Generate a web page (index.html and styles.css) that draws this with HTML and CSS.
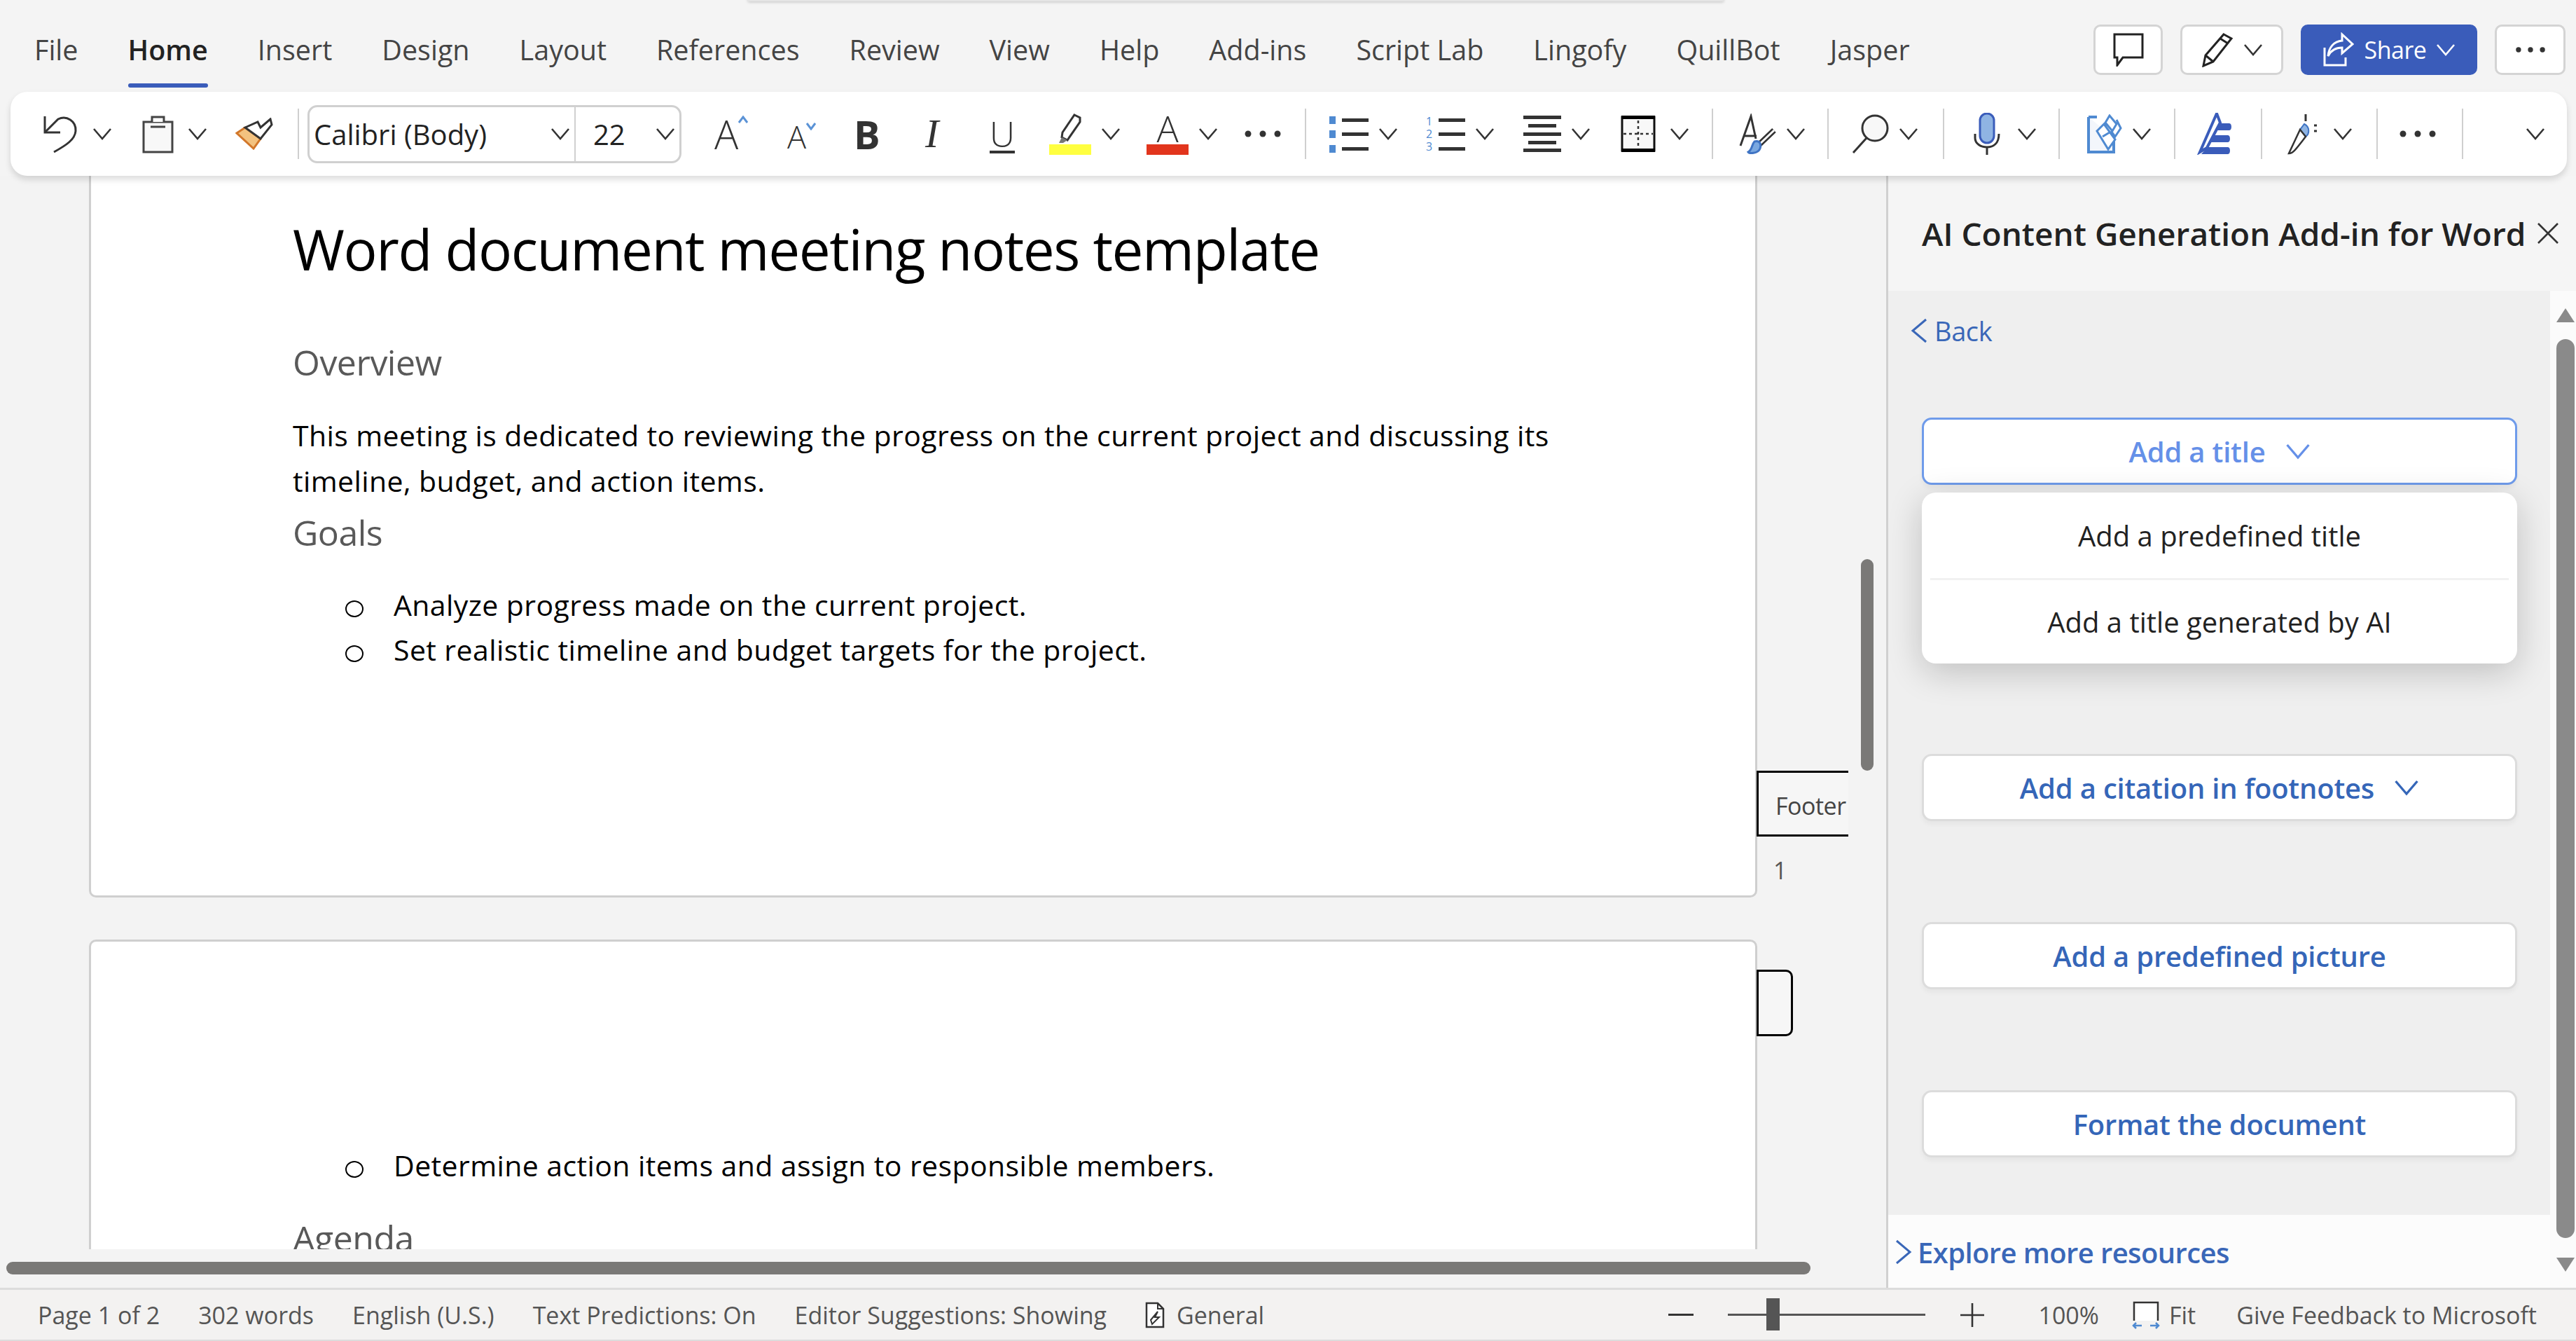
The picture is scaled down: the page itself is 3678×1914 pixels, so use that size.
FILE: index.html
```html
<!DOCTYPE html>
<html lang="en">
<head>
    <meta charset="UTF-8">
    <title>Word document meeting notes template</title>
    <link rel="stylesheet" href="styles.css">
</head>
<body>
    <svg class="defs" width="0" height="0">
        <symbol id="chev" viewBox="0 0 28 18"><path d="M2 2 14 16 26 2" fill="none" stroke="currentColor" stroke-width="2.6"/></symbol>
        <symbol id="dots" viewBox="0 0 54 12"><circle cx="6" cy="6" r="4.5"/><circle cx="27" cy="6" r="4.5"/><circle cx="48" cy="6" r="4.5"/></symbol>
    </svg>
    <div class="window-edge"></div>
    <header class="topbar">
        <nav class="tabs">
            <span>File</span>
            <span class="tab-active">Home</span>
            <span>Insert</span>
            <span>Design</span>
            <span>Layout</span>
            <span>References</span>
            <span>Review</span>
            <span>View</span>
            <span>Help</span>
            <span>Add-ins</span>
            <span>Script Lab</span>
            <span>Lingofy</span>
            <span>QuillBot</span>
            <span>Jasper</span>
        </nav>
        <div class="actions">
            <button class="act act-comment">
                <svg width="44" height="48" viewBox="0 0 44 48"><path d="M2 2H42V35H14L6 46V35H2Z" fill="#fff" stroke="#222" stroke-width="3"/></svg>
            </button>
            <button class="act act-pen">
                <svg width="46" height="50" viewBox="0 0 46 50"><path d="M32 3 43 9 17 42 3 48 6 33Z M27 9 38 16 M6 33 17 42" fill="#fff" stroke="#222" stroke-width="3"/></svg>
                <svg class="chev"><use href="#chev"/></svg>
            </button>
            <button class="act act-share">
                <svg width="46" height="50" viewBox="0 0 46 50"><path d="M3 22V47H33V36" fill="none" stroke="#fff" stroke-width="3"/><path d="M28 3 43 17 28 30V22C18 22 12 26 8 34 9 22 16 13 28 12Z" fill="none" stroke="#fff" stroke-width="3"/></svg>
                <span>Share</span>
                <svg class="chev"><use href="#chev"/></svg>
            </button>
            <button class="act act-more">
                <svg class="dots-sm"><use href="#dots"/></svg>
            </button>
        </div>
    </header>

    <section class="ribbon">
        <div class="tool">
            <svg width="51" height="56" viewBox="0 0 51 56"><path d="M3 3V26H25" fill="none" stroke="#333" stroke-width="3"/><path d="M3 26 22 7C34 1 48 10 47 24 46 36 34 44 16 54" fill="none" stroke="#333" stroke-width="3"/></svg>
            <svg class="chev"><use href="#chev"/></svg>
        </div>
        <div class="tool">
            <svg width="45" height="56" viewBox="0 0 45 56"><path d="M2 11H43V54H2Z" fill="#f8f8f8" stroke="#444" stroke-width="3"/><path d="M14 11V4H31V11M12 18H33" fill="#fff" stroke="#444" stroke-width="3"/></svg>
            <svg class="chev"><use href="#chev"/></svg>
        </div>
        <div class="tool">
            <svg width="54" height="46" viewBox="0 0 54 46"><path d="M2 22 14 14 36 30 26 44Z" fill="#f3c27f" stroke="#d2772a" stroke-width="3"/><path d="M14 14 32 6 36 14 50 2 52 10 36 30Z" fill="#fff" stroke="#333" stroke-width="3"/></svg>
        </div>
        <div class="sep"></div>
        <div class="font-combo">
            <div class="font-name"><span>Calibri (Body)</span><svg class="chev"><use href="#chev"/></svg></div>
            <div class="font-size"><span>22</span><svg class="chev"><use href="#chev"/></svg></div>
        </div>
        <div class="tool glyph glyph-a">A<svg class="caret" width="14" height="12" viewBox="0 0 14 12"><path d="M1 10 7 2 13 10" fill="none" stroke="#5b93d6" stroke-width="3"/></svg></div>
        <div class="tool glyph glyph-a-sm">A<svg class="caret" width="14" height="12" viewBox="0 0 14 12"><path d="M1 2 7 10 13 2" fill="none" stroke="#5b93d6" stroke-width="3"/></svg></div>
        <div class="tool glyph glyph-b">B</div>
        <div class="tool glyph glyph-i">I</div>
        <div class="tool glyph glyph-u">U</div>
        <div class="tool tool-tight">
            <div class="swatch-tool">
                <svg width="40" height="42" viewBox="0 0 40 42"><path d="M26 2 34 6 34 12 16 38 8 34 9 27Z" fill="#fff" stroke="#333" stroke-width="3"/><path d="M8 34 16 38 10 42H4Z" fill="#777"/></svg>
                <div class="swatch swatch-yellow"></div>
            </div>
            <svg class="chev"><use href="#chev"/></svg>
        </div>
        <div class="tool tool-tight">
            <div class="swatch-tool">
                <span class="swatch-letter">A</span>
                <div class="swatch swatch-red"></div>
            </div>
            <svg class="chev"><use href="#chev"/></svg>
        </div>
        <div class="tool"><svg class="dots"><use href="#dots"/></svg></div>
        <div class="sep"></div>
        <div class="tool tool-tight">
            <svg width="56" height="54" viewBox="0 0 56 54"><g fill="#4f8ad1"><rect x="0" y="2" width="9" height="11"/><rect x="0" y="22" width="9" height="11"/><rect x="0" y="43" width="9" height="11"/></g><g fill="#333"><rect x="18" y="5" width="38" height="5"/><rect x="18" y="25" width="38" height="5"/><rect x="18" y="46" width="38" height="5"/></g></svg>
            <svg class="chev"><use href="#chev"/></svg>
        </div>
        <div class="tool tool-tight">
            <div class="numbering">
                <div class="num-col"><span>1</span><span>2</span><span>3</span></div>
                <svg width="38" height="54" viewBox="0 0 38 54"><g fill="#333"><rect y="5" width="38" height="5"/><rect y="25" width="38" height="5"/><rect y="46" width="38" height="5"/></g></svg>
            </div>
            <svg class="chev"><use href="#chev"/></svg>
        </div>
        <div class="tool tool-tight">
            <svg width="54" height="54" viewBox="0 0 54 54"><g fill="#333"><rect y="1" width="54" height="5"/><rect x="7" y="13" width="40" height="5"/><rect y="25" width="54" height="5"/><rect x="7" y="37" width="40" height="5"/><rect y="48" width="54" height="5"/></g></svg>
            <svg class="chev"><use href="#chev"/></svg>
        </div>
        <div class="tool">
            <svg width="50" height="54" viewBox="0 0 50 54"><rect x="2" y="3" width="46" height="48" fill="#f8f8f8" stroke="#111" stroke-width="3"/><rect x="1" y="1" width="48" height="5"/><rect x="1" y="48" width="48" height="5"/><path d="M25 8V48M4 27H46" fill="none" stroke="#333" stroke-width="2.5" stroke-dasharray="4 4"/></svg>
            <svg class="chev"><use href="#chev"/></svg>
        </div>
        <div class="sep"></div>
        <div class="tool tool-tight">
            <svg width="53" height="58" viewBox="0 0 53 58"><path d="M2 46 17 4 24 36M7 32H25" fill="none" stroke="#333" stroke-width="3"/><path d="M50 24 29 44" stroke="#333" stroke-width="8" fill="none"/><path d="M50 24 29 44" stroke="#fff" stroke-width="3" fill="none"/><path d="M22 40C30 38 32 44 30 50 27 58 14 57 13 55 19 52 18 44 22 40Z" fill="#7aa8e0" stroke="#3f74c4" stroke-width="3"/></svg>
            <svg class="chev"><use href="#chev"/></svg>
        </div>
        <div class="sep"></div>
        <div class="tool tool-tight">
            <svg width="53" height="56" viewBox="0 0 53 56"><circle cx="33" cy="20" r="18" fill="#f8f8f8" stroke="#333" stroke-width="3"/><path d="M21 34 2 55" stroke="#333" stroke-width="3"/></svg>
            <svg class="chev"><use href="#chev"/></svg>
        </div>
        <div class="sep"></div>
        <div class="tool tool-wide">
            <svg width="38" height="60" viewBox="0 0 38 60"><rect x="9" y="1" width="20" height="42" rx="10" fill="#8fb4e3" stroke="#3a5cba" stroke-width="3"/><path d="M2 30V36C2 44 10 49 19 49 28 49 36 44 36 30M19 49V60" fill="none" stroke="#333" stroke-width="3"/></svg>
            <svg class="chev"><use href="#chev"/></svg>
        </div>
        <div class="sep"></div>
        <div class="tool tool-tight">
            <svg width="50" height="56" viewBox="0 0 50 56"><path d="M2 4H14M2 4V54H38V34" fill="#f3f6fb" stroke="#4f8ad1" stroke-width="4"/><path d="M32 2 42 14 36 24 26 12Z M42 8 48 20 40 32 34 24 M14 24 24 14 40 36 30 50Z M22 32 32 26" fill="#fff" stroke="#4f8ad1" stroke-width="3"/></svg>
            <svg class="chev"><use href="#chev"/></svg>
        </div>
        <div class="sep"></div>
        <div class="tool">
            <svg width="56" height="60" viewBox="0 0 56 60"><path d="M28 1 4 56 14 50 33 14Z" fill="#fff" stroke="#3a5cba" stroke-width="4"/><g fill="#3a5cba"><path d="M31 15H46C50 15 50 25 46 25H26Z"/><path d="M23 32H44C48 32 48 42 44 42H18Z"/><path d="M15 49H44C48 49 48 59 44 59H6Z"/></g></svg>
        </div>
        <div class="sep"></div>
        <div class="tool">
            <svg width="45" height="60" viewBox="0 0 45 60"><path d="M26 2V12M38 18H42M38 26H42" stroke="#333" stroke-width="3" fill="none"/><path d="M24 16C32 20 32 30 26 34L18 24Z" fill="#8fb4e3" stroke="#3f74c4" stroke-width="2"/><path d="M18 24 2 58C8 58 12 52 26 34Z" fill="#fff" stroke="#333" stroke-width="2.5"/></svg>
            <svg class="chev"><use href="#chev"/></svg>
        </div>
        <div class="sep"></div>
        <div class="tool"><svg class="dots"><use href="#dots"/></svg></div>
        <div class="sep"></div>
        <div class="tool"><svg class="chev"><use href="#chev"/></svg></div>
    </section>

    <main class="workspace">
        <div class="doc-pane">
            <div class="doc-view">
                <article class="page page-first">
                    <h1>Word document meeting notes template</h1>
                    <h2 class="h-overview">Overview</h2>
                    <p>This meeting is dedicated to reviewing the progress on the current project and discussing its timeline, budget, and action items.</p>
                    <h2>Goals</h2>
                    <ul class="list-goals">
                        <li>Analyze progress made on the current project.</li>
                        <li>Set realistic timeline and budget targets for the project.</li>
                    </ul>
                </article>
                <article class="page page-second">
                    <ul>
                        <li>Determine action items and assign to responsible members.</li>
                    </ul>
                    <h2 class="h-agenda">Agenda</h2>
                </article>
                <div class="footer-tag">Footer</div>
                <div class="page-num">1</div>
                <div class="header-tag"></div>
                <div class="v-thumb"></div>
            </div>
            <div class="h-scroll"><div class="h-thumb"></div></div>
        </div>

        <aside class="side">
            <div class="side-head">
                <span>AI Content Generation Add-in for Word</span>
                <svg width="32" height="32" viewBox="0 0 32 32"><path d="M2 2 30 30M30 2 2 30" stroke="#333" stroke-width="2.6"/></svg>
            </div>
            <div class="side-body">
                <div class="side-main">
                    <div class="side-scroll">
                        <a class="back">
                            <svg width="24" height="36" viewBox="0 0 24 36"><path d="M22 2 3 18 22 34" fill="none" stroke="#3a67b8" stroke-width="3"/></svg>
                            <span>Back</span>
                        </a>
                        <div class="title-wrap">
                            <button class="btn btn-open">Add a title<svg class="chev chev-lg"><use href="#chev"/></svg></button>
                            <div class="menu">
                                <div class="menu-item">Add a predefined title</div>
                                <div class="menu-item">Add a title generated by AI</div>
                            </div>
                        </div>
                        <button class="btn">Add a citation in footnotes<svg class="chev chev-lg"><use href="#chev"/></svg></button>
                        <button class="btn">Add a predefined picture</button>
                        <button class="btn">Format the document</button>
                    </div>
                    <a class="explore">
                        <svg width="24" height="36" viewBox="0 0 24 36"><path d="M2 2 21 18 2 34" fill="none" stroke="#3a67b8" stroke-width="3"/></svg>
                        <span>Explore more resources</span>
                    </a>
                </div>
                <div class="side-bar">
                    <div class="arrow-up"></div>
                    <div class="side-thumb"></div>
                    <div class="arrow-down"></div>
                </div>
            </div>
        </aside>
    </main>

    <footer class="status">
        <div class="status-left">
            <span>Page 1 of 2</span>
            <span>302 words</span>
            <span>English (U.S.)</span>
            <span>Text Predictions: On</span>
            <span>Editor Suggestions: Showing</span>
            <span class="status-general">
                <svg width="28" height="38" viewBox="0 0 28 38"><path d="M2 2H18L26 10V36H2Z" fill="#fff" stroke="#333" stroke-width="2.5"/><path d="M18 2V10H26M8 26 18 14 14 22 20 22 10 32Z" fill="none" stroke="#333" stroke-width="2"/></svg>
                General
            </span>
        </div>
        <div class="status-right">
            <div class="zoom-minus"></div>
            <div class="slider"><div class="slider-thumb"></div></div>
            <svg class="zoom-plus" width="34" height="34" viewBox="0 0 34 34"><path d="M17 0V34M0 17H34" stroke="#333" stroke-width="2.6"/></svg>
            <span class="zoom-val">100%</span>
            <span class="fit">
                <svg width="40" height="40" viewBox="0 0 40 40"><path d="M3 28V2H37V28" fill="#fff" stroke="#333" stroke-width="2.5"/><path d="M2 35H14M6 31 2 35 6 39M38 35H26M34 31 38 35 34 39" fill="none" stroke="#4f8ad1" stroke-width="2.5"/></svg>
                Fit
            </span>
            <span class="feedback">Give Feedback to Microsoft</span>
        </div>
    </footer>
</body>
</html>
```

FILE: styles.css
```css
* {
    box-sizing: border-box;
}
body {
    margin: 0;
    width: 3678px;
    height: 1914px;
    overflow: hidden;
    display: flex;
    flex-direction: column;
    position: relative;
    background-color: #f4f4f4;
    font-family: "Open Sans", "Noto Sans", sans-serif;
    color: #333;
}
button {
    font-family: inherit;
    cursor: pointer;
}
.defs {
    position: absolute;
}
.window-edge {
    position: absolute;
    top: -4px;
    left: 1068px;
    width: 1393px;
    height: 6px;
    background-color: #e4e4e4;
    box-shadow: 0 1px 4px rgba(0, 0, 0, 0.2);
}

/* top bar */
.topbar {
    height: 131px;
    flex: none;
    display: flex;
    justify-content: space-between;
    align-items: flex-start;
    padding: 35px 15px 0 49px;
}
.tabs {
    display: flex;
    gap: 71px;
    font-size: 39.5px;
    line-height: 60px;
    color: #444;
    height: 78px;
    margin-top: 6px;
}
.tab-active {
    font-weight: 600;
    color: #222;
    position: relative;
}
.tab-active::after {
    content: "";
    position: absolute;
    left: 0;
    right: 0;
    bottom: -6px;
    height: 6px;
    border-radius: 3px;
    background-color: #3a5cba;
}
.actions {
    display: flex;
    gap: 25px;
}
.act {
    height: 72px;
    border: 3px solid #d4d4d4;
    border-radius: 10px;
    background: #fff;
    display: flex;
    align-items: center;
    justify-content: center;
    gap: 14px;
    padding: 0;
    color: #333;
}
.act-comment {
    width: 99px;
}
.act-pen {
    width: 147px;
}
.act-share {
    width: 252px;
    background-color: #3a5cba;
    border-color: #3a5cba;
    color: #fff;
    font-size: 34px;
    letter-spacing: -0.5px;
}
.act-share .chev {
    color: #fff;
}
.act-more {
    width: 101px;
}
.dots-sm {
    width: 44px;
    height: 10px;
    fill: #333;
}

/* ribbon */
.ribbon {
    height: 120px;
    flex: none;
    margin: 0 13px 0 15px;
    padding-left: 46px;
    background: #fff;
    border-radius: 24px;
    box-shadow: 0 5px 10px rgba(0, 0, 0, 0.14);
    position: relative;
    z-index: 2;
    display: grid;
    grid-template-columns: 142px 133px 89px 14px 581px 104px 99px 98px 92px 85px 139px 139px 87px 35px 138px 139px 139px 130px 39px 126px 35px 130px 44px 121px 41px 124px 33px 91px 38px 127px 32px 90px 91px 40px;
    align-items: center;
    color: #333;
}
.tool {
    display: flex;
    align-items: center;
    gap: 20px;
}
.tool-tight {
    gap: 14px;
}
.tool-wide {
    gap: 24px;
}
.chev {
    width: 28px;
    height: 18px;
    flex: none;
    color: #333;
}
.dots {
    width: 54px;
    height: 12px;
    fill: #333;
}
.sep {
    width: 2px;
    height: 72px;
    background-color: #cfcfcf;
}
.font-combo {
    width: 534px;
    height: 83px;
    display: flex;
    border: 3px solid #d0d0d0;
    border-radius: 14px;
    font-size: 40px;
    color: #222;
}
.font-name {
    width: 380px;
    border-right: 2px solid #d0d0d0;
    display: flex;
    align-items: center;
    justify-content: space-between;
    padding: 0 6px 0 6px;
}
.font-size {
    flex: 1;
    display: flex;
    align-items: center;
    justify-content: space-between;
    padding: 0 6px 0 25px;
}
.glyph {
    gap: 0;
    align-items: flex-start;
    line-height: 1;
    color: #333;
}
.glyph-a {
    font-size: 57px;
    font-weight: 300;
}
.glyph-a-sm {
    font-size: 45px;
    font-weight: 300;
    margin-top: 6px;
}
.caret {
    margin-top: 2px;
}
.glyph-b {
    font-size: 56px;
    font-weight: 700;
    margin-left: -4px;
}
.glyph-i {
    font-family: "Liberation Serif", serif;
    font-size: 58px;
    font-style: italic;
}
.glyph-u {
    font-size: 50px;
    text-decoration: underline;
    text-decoration-thickness: 4px;
    text-underline-offset: 5px;
    font-weight: 300;
}
.swatch-tool {
    width: 60px;
    display: flex;
    flex-direction: column;
    align-items: center;
}
.swatch {
    width: 60px;
    height: 15px;
    margin-top: 2px;
}
.swatch-yellow {
    background-color: #ffff40;
}
.swatch-red {
    background-color: #e2351d;
}
.swatch-letter {
    font-size: 52px;
    font-weight: 300;
    line-height: 42px;
}
.numbering {
    display: flex;
    gap: 6px;
}
.num-col {
    width: 12px;
    display: flex;
    flex-direction: column;
    justify-content: space-between;
    font-size: 16px;
    line-height: 18px;
    color: #4f8ad1;
}

/* main area */
.workspace {
    flex: 1;
    min-height: 0;
    display: flex;
}
.doc-pane {
    width: 2693px;
    flex: none;
    display: flex;
    flex-direction: column;
    background-color: #f3f3f3;
}
.doc-view {
    height: 1532px;
    overflow: hidden;
    position: relative;
    padding-left: 127px;
}
.page {
    width: 2382px;
    background: #fff;
    border: 3px solid #cfcfcf;
    border-radius: 10px;
    padding-left: 288px;
    color: #000;
}
.page-first {
    height: 1030px;
    border-top: none;
    border-radius: 0 0 10px 10px;
    padding-top: 54px;
}
.page-second {
    margin-top: 60px;
    height: 600px;
    padding-top: 287px;
}
h1 {
    margin: 0 0 76px;
    font-size: 80px;
    font-weight: 400;
    letter-spacing: -1.4px;
    line-height: 100px;
}
h2 {
    margin: 0;
    font-size: 50px;
    font-weight: 400;
    letter-spacing: -0.5px;
    line-height: 72px;
    color: #595959;
}
.h-agenda {
    margin-top: 36px;
}
p {
    margin: 36px 0 5px;
    width: 1830px;
    font-size: 41px;
    letter-spacing: 0.4px;
    line-height: 65px;
}
ul {
    margin: 0;
    padding: 0 0 0 144px;
    list-style: none;
    font-size: 41px;
    letter-spacing: 0.4px;
    line-height: 64px;
}
.list-goals {
    margin-top: 35px;
}
li {
    position: relative;
}
li::before {
    content: "";
    position: absolute;
    left: -69px;
    top: 26px;
    width: 22px;
    height: 20px;
    border: 2.5px solid #000;
    border-radius: 50%;
}
.footer-tag {
    position: absolute;
    left: 2508px;
    top: 849px;
    width: 131px;
    height: 94px;
    background-color: #f6f6f6;
    border: solid #000;
    border-width: 3px 0 3px 3px;
    padding-left: 24px;
    font-size: 34px;
    letter-spacing: -0.5px;
    line-height: 94px;
    color: #444;
    overflow: hidden;
    white-space: nowrap;
}
.page-num {
    position: absolute;
    left: 2532px;
    top: 967px;
    font-size: 34px;
    line-height: 48px;
    color: #555;
}
.header-tag {
    position: absolute;
    left: 2508px;
    top: 1133px;
    width: 52px;
    height: 95px;
    background-color: #f6f6f6;
    border: 3px solid #000;
    border-radius: 0 10px 10px 0;
}
.v-thumb {
    position: absolute;
    left: 2657px;
    top: 547px;
    width: 18px;
    height: 302px;
    border-radius: 9px;
    background-color: #7a7977;
}
.h-scroll {
    height: 55px;
    padding: 18px 0 0 9px;
}
.h-thumb {
    width: 2576px;
    height: 18px;
    border-radius: 9px;
    background-color: #7a7977;
}

/* add-in panel */
.side {
    flex: 1;
    display: flex;
    flex-direction: column;
    border-left: 3px solid #d0d0d0;
    min-width: 0;
}
.side-head {
    height: 164px;
    flex: none;
    display: flex;
    align-items: center;
    padding: 0 24px 1px 48px;
    justify-content: space-between;
    background-color: #f5f5f5;
    font-size: 46px;
    font-weight: 600;
    color: #222;
}
.side-body {
    flex: 1;
    min-height: 0;
    display: flex;
}
.side-main {
    flex: 1;
    min-height: 0;
    display: flex;
    flex-direction: column;
}
.side-scroll {
    flex: 1;
    min-height: 0;
    overflow: hidden;
    background-color: #efefef;
    padding: 38px 47px 0 48px;
}
.back {
    display: flex;
    align-items: center;
    gap: 10px;
    margin-left: -16px;
    height: 38px;
    font-size: 38px;
    letter-spacing: -0.4px;
    color: #3a67b8;
}
.title-wrap {
    position: relative;
    margin-top: 105px;
}
.btn {
    display: flex;
    align-items: center;
    justify-content: center;
    gap: 28px;
    width: 100%;
    height: 96px;
    margin-bottom: 144px;
    background: #fff;
    border: 3px solid #dcdcdc;
    border-radius: 14px;
    box-shadow: 0 5px 6px rgba(0, 0, 0, 0.04);
    font-size: 40px;
    font-weight: 600;
    letter-spacing: -0.2px;
    color: #3566b8;
}
.btn-open {
    margin-bottom: 384px;
    border-color: #6f9bea;
    color: #6590e8;
}
.btn-open .chev {
    color: #6590e8;
}
.chev-lg {
    width: 36px;
    height: 26px;
    color: #3566b8;
}
.menu {
    position: absolute;
    left: 0;
    right: 0;
    top: 107px;
    height: 244px;
    background: #fff;
    border-radius: 20px;
    box-shadow: 0 12px 50px rgba(0, 0, 0, 0.2);
    padding: 0 12px;
    z-index: 1;
}
.menu-item {
    height: 122px;
    display: flex;
    align-items: center;
    justify-content: center;
    font-size: 40px;
    color: #222;
}
.menu-item + .menu-item {
    border-top: 3px solid #f1f1f1;
}
.explore {
    height: 104px;
    flex: none;
    display: flex;
    align-items: center;
    gap: 8px;
    padding: 2px 0 0 10px;
    background-color: #fcfcfc;
    font-size: 40px;
    font-weight: 600;
    letter-spacing: -0.6px;
    color: #3a67b8;
}
.side-bar {
    width: 37px;
    flex: none;
    background-color: #fbfbfb;
    padding: 25px 2px 0 9px;
    display: flex;
    flex-direction: column;
}
.arrow-up,
.arrow-down {
    width: 0;
    height: 0;
    flex: none;
    border-left: 13px solid transparent;
    border-right: 13px solid transparent;
}
.arrow-up {
    border-bottom: 20px solid #8a8a8a;
}
.arrow-down {
    border-top: 20px solid #8a8a8a;
    margin-top: 28px;
}
.side-thumb {
    margin-top: 24px;
    height: 1283px;
    flex: none;
    border-radius: 13px;
    background-color: #8a8a8a;
}

/* status bar */
.status {
    height: 76px;
    flex: none;
    display: flex;
    justify-content: space-between;
    align-items: center;
    padding: 0 56px 0 54px;
    border-top: 3px solid #dcdcdc;
    border-bottom: 2px solid #dcdcdc;
    background-color: #f3f2f1;
    font-size: 34px;
    color: #555;
}
.status-left,
.status-right {
    display: flex;
    align-items: center;
}
.status-left {
    gap: 55px;
}
.status-general {
    display: flex;
    align-items: center;
    gap: 17px;
}
.zoom-minus {
    width: 36px;
    height: 3px;
    background-color: #333;
}
.slider {
    position: relative;
    width: 282px;
    height: 3px;
    margin-left: 49px;
    background-color: #555;
}
.slider-thumb {
    position: absolute;
    left: 55px;
    top: -22px;
    width: 19px;
    height: 46px;
    background-color: #555;
}
.zoom-plus {
    margin-left: 50px;
}
.zoom-val {
    margin-left: 77px;
}
.fit {
    display: flex;
    align-items: center;
    gap: 13px;
    margin-left: 47px;
}
.feedback {
    margin-left: 58px;
}
```
